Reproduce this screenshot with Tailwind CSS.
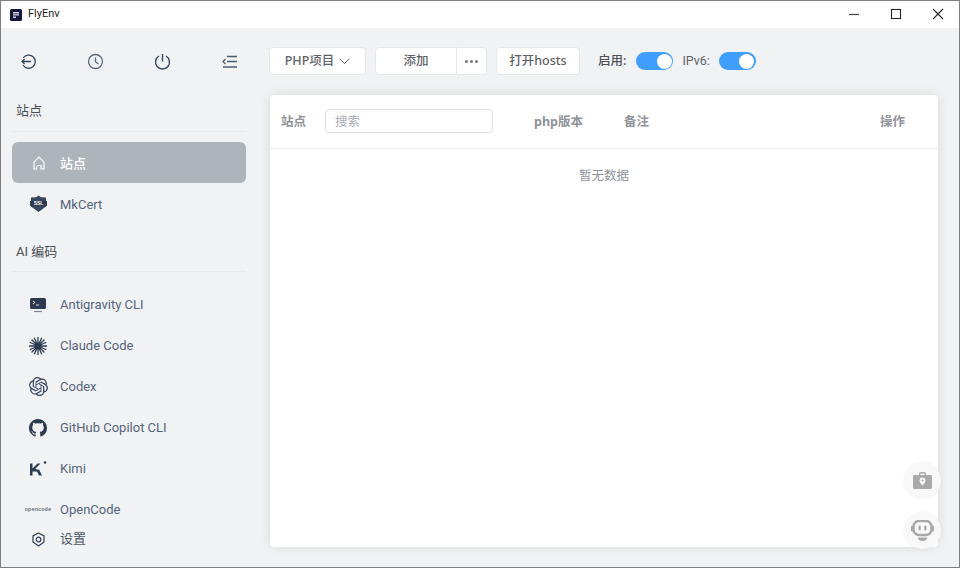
<!DOCTYPE html>
<html lang="zh">
<head>
<meta charset="utf-8">
<script src="https://cdn.jsdelivr.net/npm/@tailwindcss/browser@4"></script>
</head>
<body class="w-[960px] h-[568px] overflow-hidden font-['Noto_Sans','Noto_Sans_CJK_SC',sans-serif]">
<div class="w-[960px] h-[568px] border border-[#808080] flex flex-col bg-[#f1f2f4] overflow-hidden">
  <header class="h-[27px] shrink-0 bg-white flex items-center">
    <svg class="ml-[9px] w-3 h-3" viewBox="0 0 12 12"><rect width="12" height="12" rx="1.500" fill="#14163a"/><path d="M3 3h6v1.500H3zM3 5.300h6v1.200H3zM3 7.500h3V9H3z" fill="#d5d9e6"/></svg>
    <span class="ml-[6px] text-[11px] text-[#222] font-['Roboto','Noto_Sans',sans-serif]">FlyEnv</span>
    <div class="ml-auto flex items-center">
      <svg class="w-[42px] h-[27px]" viewBox="0 0 42 27"><path d="M16 13.500h10" stroke="#444" stroke-width="1.200"/></svg>
      <svg class="w-[42px] h-[27px]" viewBox="0 0 42 27"><rect x="16.500" y="8.500" width="9" height="9" fill="none" stroke="#222" stroke-width="1.100"/></svg>
      <svg class="w-[42px] h-[27px]" viewBox="0 0 42 27"><path d="M16 8l10 10M26 8L16 18" stroke="#222" stroke-width="1.100"/></svg>
    </div>
  </header>
  <div class="flex flex-1 min-h-0">
    <aside class="w-[257px] shrink-0 flex flex-col text-[13px] text-[#566479] font-['Roboto','Noto_Sans_CJK_SC',sans-serif]">
      <div class="h-[64px] shrink-0 flex items-center justify-between pl-[19px] pr-[20px] pt-[3px]">
        <svg class="w-[17px] h-[17px]" viewBox="0 0 17 17" fill="none" stroke="#36465c" stroke-width="1.300"><path d="M3.200 5A6.600 6.600 0 1 1 3 12"/><path d="M11 8.500H2M4.600 6 2 8.500 4.600 11"/></svg>
        <svg class="w-[17px] h-[17px]" viewBox="0 0 17 17" fill="none" stroke="#5a6779" stroke-width="1.300"><circle cx="8.500" cy="8.500" r="7"/><path d="M8.500 4.500v4.200l3 2.200"/></svg>
        <svg class="w-[17px] h-[17px]" viewBox="0 0 17 17" fill="none" stroke="#36465c" stroke-width="1.400"><path d="M5 3A7 7 0 1 0 12 3"/><path d="M8.500 1v7.500"/></svg>
        <svg class="w-[17px] h-[17px]" viewBox="0 0 17 17" fill="none" stroke="#4d5b6e" stroke-width="1.300"><path d="M6 3.500h10M6 8.500h10M2 14h14M4.500 6 2 8.500 4.500 11" /></svg>
      </div>
      <div class="ml-[11px] mr-[12px] pl-[4px] pb-[2px] h-[40px] flex items-center border-b border-[#e6e8eb] text-[#4b4f55]">站点</div>
      <nav class="ml-[11px] mr-[12px] mt-[10px]">
        <div class="h-[41px] rounded-md bg-[#adb4ba] flex items-center text-white font-medium">
          <span class="w-[48px] pl-[5px] flex justify-center"><svg class="w-[16px] h-[16px]" viewBox="0 0 16 16" fill="none" stroke="#fff" stroke-width="1.200"><path d="M5.500 14H3V7.200L8 2l5 5.200V14h-3V10.500H7.500a2 2 0 0 0-2 2z"/></svg></span>
          <span class="pt-[3px]">站点</span>
        </div>
        <div class="h-[41px] flex items-center">
          <span class="w-[48px] pl-[5px] flex justify-center"><svg class="w-[17px] h-[18px]" viewBox="0 0 17 18"><path d="M8.500.500 11 2.200l5 .4v9L8.500 17 1 11.600v-9l5-.4z" fill="#36465c"/><path d="M0 6h17v5H0z" fill="#2c3a4e"/><text x="8.500" y="10.300" font-size="5" font-weight="700" fill="#fff" text-anchor="middle" font-family="Liberation Sans">SSL</text></svg></span>
          <span class="pt-[3px]">MkCert</span>
        </div>
      </nav>
      <div class="ml-[11px] mr-[12px] pl-[4px] mt-[8px] h-[40px] flex items-center border-b border-[#e6e8eb] text-[#4b4f55]">AI 编码</div>
      <nav class="ml-[11px] mr-[12px] mt-[12px]">
        <div class="h-[41px] flex items-center">
          <span class="w-[48px] pl-[4px] flex justify-center"><svg class="w-[16px] h-[16px]" viewBox="0 0 16 16"><rect y="1" width="16" height="11" rx="1.500" fill="#2b3a4e"/><path d="M3 4l2 1.500L3 7M6 8h3" stroke="#fff" stroke-width=".8" fill="none"/><path d="M4 14.500h8" stroke="#7b8694" stroke-width="1.200"/></svg></span>
          <span class="pt-[1px]">Antigravity CLI</span>
        </div>
        <div class="h-[41px] flex items-center">
          <span class="w-[48px] pl-[4px] flex justify-center"><svg class="w-[18px] h-[18px]" viewBox="0 0 18 18" stroke="#2b3a4e" stroke-width="1.300" stroke-linecap="round"><path d="M9 .500v17M.500 9h17M3 3l12 12M15 3 3 15M5.500 1.200l7 15.600M12.500 1.200l-7 15.600M1.200 5.500l15.600 7M16.800 5.500l-15.600 7"/></svg></span>
          <span class="pt-[1px]">Claude Code</span>
        </div>
        <div class="h-[41px] flex items-center">
          <span class="w-[48px] pl-[4px] flex justify-center"><svg class="w-[19px] h-[19px]" viewBox="0 0 24 24" fill="#36465c"><path d="M22.2819 9.8211a5.9847 5.9847 0 0 0-.5157-4.9108 6.0462 6.0462 0 0 0-6.5098-2.9A6.0651 6.0651 0 0 0 4.9807 4.1818a5.9847 5.9847 0 0 0-3.9977 2.9 6.0462 6.0462 0 0 0 .7427 7.0966 5.98 5.98 0 0 0 .511 4.9107 6.051 6.051 0 0 0 6.5146 2.9001A5.9847 5.9847 0 0 0 13.2599 24a6.0557 6.0557 0 0 0 5.7718-4.2058 5.9894 5.9894 0 0 0 3.9977-2.9001 6.0557 6.0557 0 0 0-.7475-7.0729zm-9.022 12.6081a4.4755 4.4755 0 0 1-2.8764-1.0408l.1419-.0804 4.7783-2.7582a.7948.7948 0 0 0 .3927-.6813v-6.7369l2.02 1.1686a.071.071 0 0 1 .038.052v5.5826a4.504 4.504 0 0 1-4.4945 4.4944zm-9.6607-4.1254a4.4708 4.4708 0 0 1-.5346-3.0137l.142.0852 4.783 2.7582a.7712.7712 0 0 0 .7806 0l5.8428-3.3685v2.3324a.0804.0804 0 0 1-.0332.0615L9.74 19.9502a4.4992 4.4992 0 0 1-6.1408-1.6464zM2.3408 7.8956a4.485 4.485 0 0 1 2.3655-1.9728V11.6a.7664.7664 0 0 0 .3879.6765l5.8144 3.3543-2.0201 1.1685a.0757.0757 0 0 1-.071 0l-4.8303-2.7865A4.504 4.504 0 0 1 2.3408 7.872zm16.5963 3.8558L13.1038 8.364 15.1192 7.2a.0757.0757 0 0 1 .071 0l4.8303 2.7913a4.4944 4.4944 0 0 1-.6765 8.1042v-5.6772a.79.79 0 0 0-.407-.667zm2.0107-3.0231l-.142-.0852-4.7735-2.7818a.7759.7759 0 0 0-.7854 0L9.409 9.2297V6.8974a.0662.0662 0 0 1 .0284-.0615l4.8303-2.7866a4.4992 4.4992 0 0 1 6.6802 4.66zM8.3065 12.863l-2.02-1.1638a.0804.0804 0 0 1-.038-.0567V6.0742a4.4992 4.4992 0 0 1 7.3757-3.4537l-.142.0805L8.704 5.459a.7948.7948 0 0 0-.3927.6813zm1.0976-2.3654l2.602-1.4998 2.6069 1.4998v2.9994l-2.5974 1.4997-2.6067-1.4997Z"/></svg></span>
          <span class="pt-[1px]">Codex</span>
        </div>
        <div class="h-[41px] flex items-center">
          <span class="w-[48px] pl-[4px] flex justify-center"><svg class="w-[18px] h-[18px]" viewBox="0 0 16 16" fill="#2b3a4e"><path d="M8 0C3.580 0 0 3.580 0 8c0 3.540 2.290 6.530 5.470 7.590.4.070.55-.17.55-.38 0-.19-.01-.82-.01-1.490-2.010.37-2.530-.49-2.690-.94-.09-.23-.48-.94-.82-1.130-.28-.15-.68-.52-.01-.53.63-.01 1.080.58 1.230.82.720 1.210 1.870.870 2.330.660.070-.520.280-.870.510-1.070-1.780-.2-3.640-.890-3.640-3.950 0-.870.310-1.590.820-2.150-.080-.2-.360-1.020.080-2.120 0 0 .670-.210 2.200.820.640-.180 1.320-.270 2-.270s1.360.090 2 .270c1.530-1.040 2.200-.820 2.200-.820.440 1.100.160 1.920.080 2.120.510.560.820 1.270.820 2.150 0 3.070-1.870 3.750-3.650 3.950.290.250.540.730.540 1.480 0 1.070-.010 1.930-.010 2.200 0 .210.150.460.550.380A8.010 8.010 0 0 0 16 8c0-4.420-3.580-8-8-8z"/></svg></span>
          <span class="pt-[1px]">GitHub Copilot CLI</span>
        </div>
        <div class="h-[41px] flex items-center">
          <span class="w-[48px] pl-[4px] flex justify-center"><svg class="w-[17px] h-[15px]" viewBox="0 0 17 15" fill="#2b3a4e"><path d="M0 2.500h2.500v5L7.500 2.500h3L5.500 7.500l1 1H9L12 14.500H9L7 10.500H2.500v4H0z"/><circle cx="15" cy="1.500" r="1.300"/></svg></span>
          <span class="pt-[1px]">Kimi</span>
        </div>
        <div class="h-[41px] flex items-center">
          <span class="w-[48px] pl-[4px] flex justify-center text-[5.500px] text-[#6b7280] leading-none font-bold font-['Liberation_Mono',monospace]">opencode</span>
          <span class="pt-[1px]">OpenCode</span>
        </div>
      </nav>
      <div class="ml-[11px] mr-[12px] -mt-[1px] h-[20px] flex items-center">
        <span class="w-[48px] pl-[5px] flex justify-center"><svg class="w-[15px] h-[15px]" viewBox="0 0 15 15" fill="none" stroke="#2f3e52" stroke-width="1.200"><path d="M7.500 1 13 3.900v6.200L7.500 14 2 10.100V3.900z" stroke-linejoin="round"/><circle cx="7.500" cy="7.500" r="2.300"/></svg></span>
        <span class="text-[#4b5666]">设置</span>
      </div>
    </aside>
    <main class="flex-1 min-w-0 pl-[12px] pr-[21px] flex flex-col">
      <div class="h-[28px] mt-[19px] -ml-[1px] shrink-0 flex items-center text-[12.500px] text-[#606266] font-medium">
        <div class="w-[97px] h-[28px] pt-[1px] bg-white border border-[#e4e7ed] rounded flex items-center justify-center gap-[5px]">PHP项目<svg class="w-[11px] h-[7px]" viewBox="0 0 11 7" fill="none" stroke="#606266"><path d="M.800.800 5.500 5.500 10.200.800"/></svg></div>
        <div class="ml-[9px] flex">
          <div class="w-[82px] h-[28px] pt-[1px] bg-white border border-[#e4e7ed] rounded-l flex items-center justify-center">添加</div>
          <div class="w-[30px] h-[28px] bg-white border border-l-0 border-[#e4e7ed] rounded-r flex items-center justify-center gap-[2px]"><i class="w-[3px] h-[3px] rounded-full bg-[#75787c]"></i><i class="w-[3px] h-[3px] rounded-full bg-[#75787c]"></i><i class="w-[3px] h-[3px] rounded-full bg-[#75787c]"></i></div>
        </div>
        <div class="ml-[9px] w-[84px] h-[28px] pt-[1px] bg-white border border-[#e4e7ed] rounded flex items-center justify-center">打开hosts</div>
        <span class="ml-[18px] pt-[1px] text-[#4f5257]">启用:</span>
        <div class="ml-[10px] w-[37px] h-[18px] rounded-full bg-[#409eff] flex items-center justify-end pr-[1.500px]"><i class="w-[15px] h-[15px] rounded-full bg-white"></i></div>
        <span class="ml-[9px] pt-[1px] font-normal font-['Roboto',sans-serif]">IPv6:</span>
        <div class="ml-[9px] w-[37px] h-[18px] rounded-full bg-[#409eff] flex items-center justify-end pr-[1.500px]"><i class="w-[15px] h-[15px] rounded-full bg-white"></i></div>
      </div>
      <section class="mt-[20px] w-[668px] h-[452px] shrink-0 bg-white rounded-sm shadow-[0_0_12px_rgba(0,0,0,0.1)] relative">
        <div class="h-[54px] border-b border-[#ebeef5] flex items-center text-[12.500px] font-bold text-[#909399]">
          <span class="ml-[11px] pt-[2px]">站点</span>
          <div class="ml-[19px] w-[168px] h-[24px] -mt-[1px] border border-[#dcdfe6] rounded flex items-center pl-[9px] pt-[2px] font-normal text-[#a8abb2]">搜索</div>
          <span class="ml-[41px] w-[90px] pt-[2px]">php版本</span>
          <span class="pt-[2px]">备注</span>
          <span class="ml-auto mr-[33px] pt-[2px]">操作</span>
        </div>
        <div class="h-[54px] pt-[1px] flex items-center justify-center text-[12.500px] text-[#909399]">暂无数据</div>
      </section>
    </main>
  </div>
</div>
<div class="fixed left-[904px] top-[462px] w-[37px] h-[37px] rounded-full bg-[#f8f8f8] shadow-[0_0_3px_rgba(0,0,0,0.06)] flex items-center justify-center">
  <svg class="w-[19px] h-[17px]" viewBox="0 0 19 17" fill="#a9a9a9"><path d="M6 3V1.500A1.500 1.500 0 0 1 7.500 0h4A1.500 1.500 0 0 1 13 1.500V3h4.500A1.500 1.500 0 0 1 19 4.500v11a1.500 1.500 0 0 1-1.500 1.500h-16A1.500 1.500 0 0 1 0 15.500v-11A1.500 1.500 0 0 1 1.500 3zM7.500 1.500V3h4V1.500z"/><path d="M9.500 5.500a3 3 0 0 0-3 3c0 2 3 5 3 5s3-3 3-5a3 3 0 0 0-3-3z" fill="#f8f8f8"/><circle cx="9.500" cy="8.500" r="1.100" fill="#a9a9a9"/></svg>
</div>
<div class="fixed left-[904px] top-[512px] w-[37px] h-[37px] rounded-full bg-[#f8f8f8] shadow-[0_0_3px_rgba(0,0,0,0.06)] flex items-center justify-center">
  <svg class="w-[23px] h-[21px]" viewBox="0 0 23 21"><rect x="2.500" y="1" width="18" height="14" rx="5.500" fill="none" stroke="#a9a9a9" stroke-width="2.500"/><rect x="0" y="5.500" width="2" height="6" rx="1" fill="#a9a9a9"/><rect x="21" y="5.500" width="2" height="6" rx="1" fill="#a9a9a9"/><rect x="7.500" y="5.500" width="2.300" height="5" rx="1.100" fill="#a9a9a9"/><rect x="13.200" y="5.500" width="2.300" height="5" rx="1.100" fill="#a9a9a9"/><path d="M7 17.500h9a4 3 0 0 1-9 0z" fill="#a9a9a9"/></svg>
</div>
</body>
</html>
